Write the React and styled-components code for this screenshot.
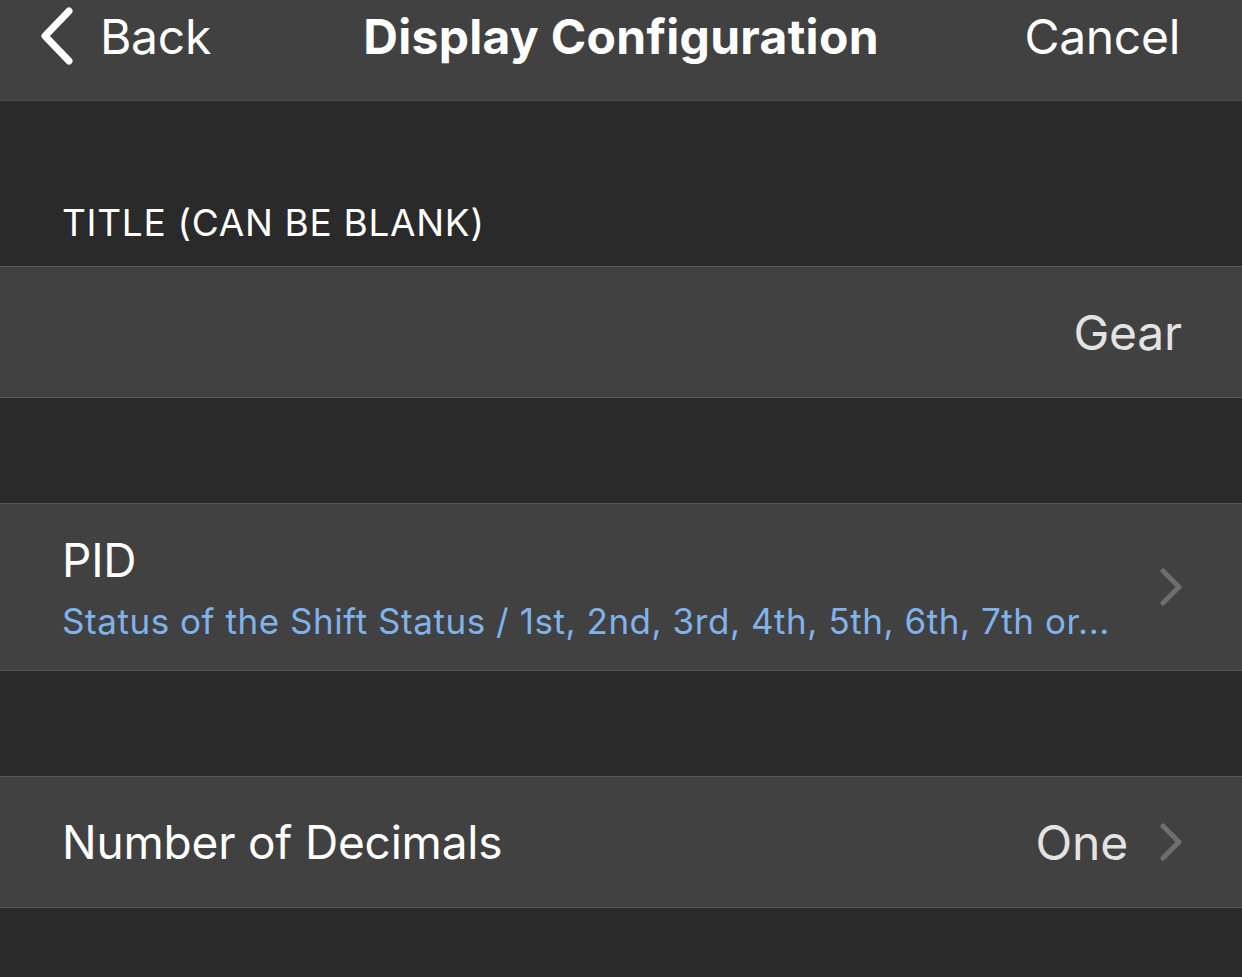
import React from 'react';
import styled, { createGlobalStyle } from 'styled-components';

const GlobalStyle = createGlobalStyle`
  html, body {
    margin: 0;
    padding: 0;
    background: #2a2a2a;
  }
  body {
    font-family: Inter, "Open Sans", "Liberation Sans", sans-serif;
    -webkit-font-smoothing: antialiased;
  }
`;

const Page = styled.div`
  width: 1242px;
  min-height: 977px;
  background: #2a2a2a;
  display: flex;
  flex-direction: column;
`;

const NavBar = styled.div`
  height: 101px;
  box-sizing: border-box;
  background: #414141;
  border-bottom: 1px solid #4d4d4d;
  display: grid;
  grid-template-columns: 1fr auto 1fr;
  align-items: center;
  padding: 0 62px 28px 62px;
`;

const BackButton = styled.div`
  display: flex;
  align-items: center;
  gap: 26px;
  margin-left: -22px;
  color: #ffffff;
  font-size: 48px;
  letter-spacing: -0.3px;
`;

const NavTitle = styled.div`
  color: #ffffff;
  font-size: 48px;
  font-weight: 700;
  letter-spacing: 0.3px;
`;

const CancelButton = styled.div`
  justify-self: end;
  color: #ffffff;
  font-size: 48px;
  letter-spacing: -0.3px;
`;

const SectionHeader = styled.div`
  padding: 101px 62px 22px;
  color: #ffffff;
  font-size: 37px;
  letter-spacing: 0.7px;
  line-height: 42px;
`;

const Spacer = styled.div`
  height: ${(p) => p.h}px;
`;

const Row = styled.div`
  height: ${(p) => p.h}px;
  box-sizing: border-box;
  background: #414141;
  border-top: 1px solid #575757;
  border-bottom: 1px solid #575757;
  display: flex;
  align-items: center;
  justify-content: ${(p) => (p.end ? 'flex-end' : 'flex-start')};
  padding: 0 60px 0 62px;
`;

const RowMain = styled.div`
  flex: 1;
  min-width: 0;
  display: flex;
  flex-direction: column;
  gap: 14px;
`;

const RowLabel = styled.div`
  color: #ffffff;
  font-size: 46px;
  letter-spacing: -0.2px;
  line-height: 54px;
`;

const RowSub = styled.div`
  color: #80b3ea;
  font-size: 35px;
  letter-spacing: 0.55px;
  line-height: 40px;
  white-space: nowrap;
`;

const RowValue = styled.div`
  color: #e3e3e3;
  font-size: 48px;
  letter-spacing: -0.2px;
  margin-right: ${(p) => (p.withChevron ? 32 : 0)}px;
`;

const Chevron = () => (
  <svg width="22" height="38" viewBox="0 0 22 38" fill="none">
    <path d="M3 3 L19 19 L3 35" stroke="#6e6e6e" strokeWidth="5" strokeLinecap="round" strokeLinejoin="round" />
  </svg>
);

const BackChevron = () => (
  <svg width="34" height="58" viewBox="0 0 34 58" fill="none">
    <path d="M29 4 L5 29 L29 54" stroke="#ffffff" strokeWidth="7" strokeLinecap="round" strokeLinejoin="round" />
  </svg>
);

const App = () => {
  return (
    <Page>
      <GlobalStyle />
      <NavBar>
        <BackButton>
          <BackChevron />
          <span>Back</span>
        </BackButton>
        <NavTitle>Display Configuration</NavTitle>
        <CancelButton>Cancel</CancelButton>
      </NavBar>
      <SectionHeader>TITLE (CAN BE BLANK)</SectionHeader>
      <Row h={132} end>
        <RowValue>Gear</RowValue>
      </Row>
      <Spacer h={105} />
      <Row h={168}>
        <RowMain>
          <RowLabel>PID</RowLabel>
          <RowSub>Status of the Shift Status / 1st, 2nd, 3rd, 4th, 5th, 6th, 7th or...</RowSub>
        </RowMain>
        <Chevron />
      </Row>
      <Spacer h={105} />
      <Row h={132}>
        <RowMain>
          <RowLabel>Number of Decimals</RowLabel>
        </RowMain>
        <RowValue withChevron>One</RowValue>
        <Chevron />
      </Row>
    </Page>
  );
};

export default App;
